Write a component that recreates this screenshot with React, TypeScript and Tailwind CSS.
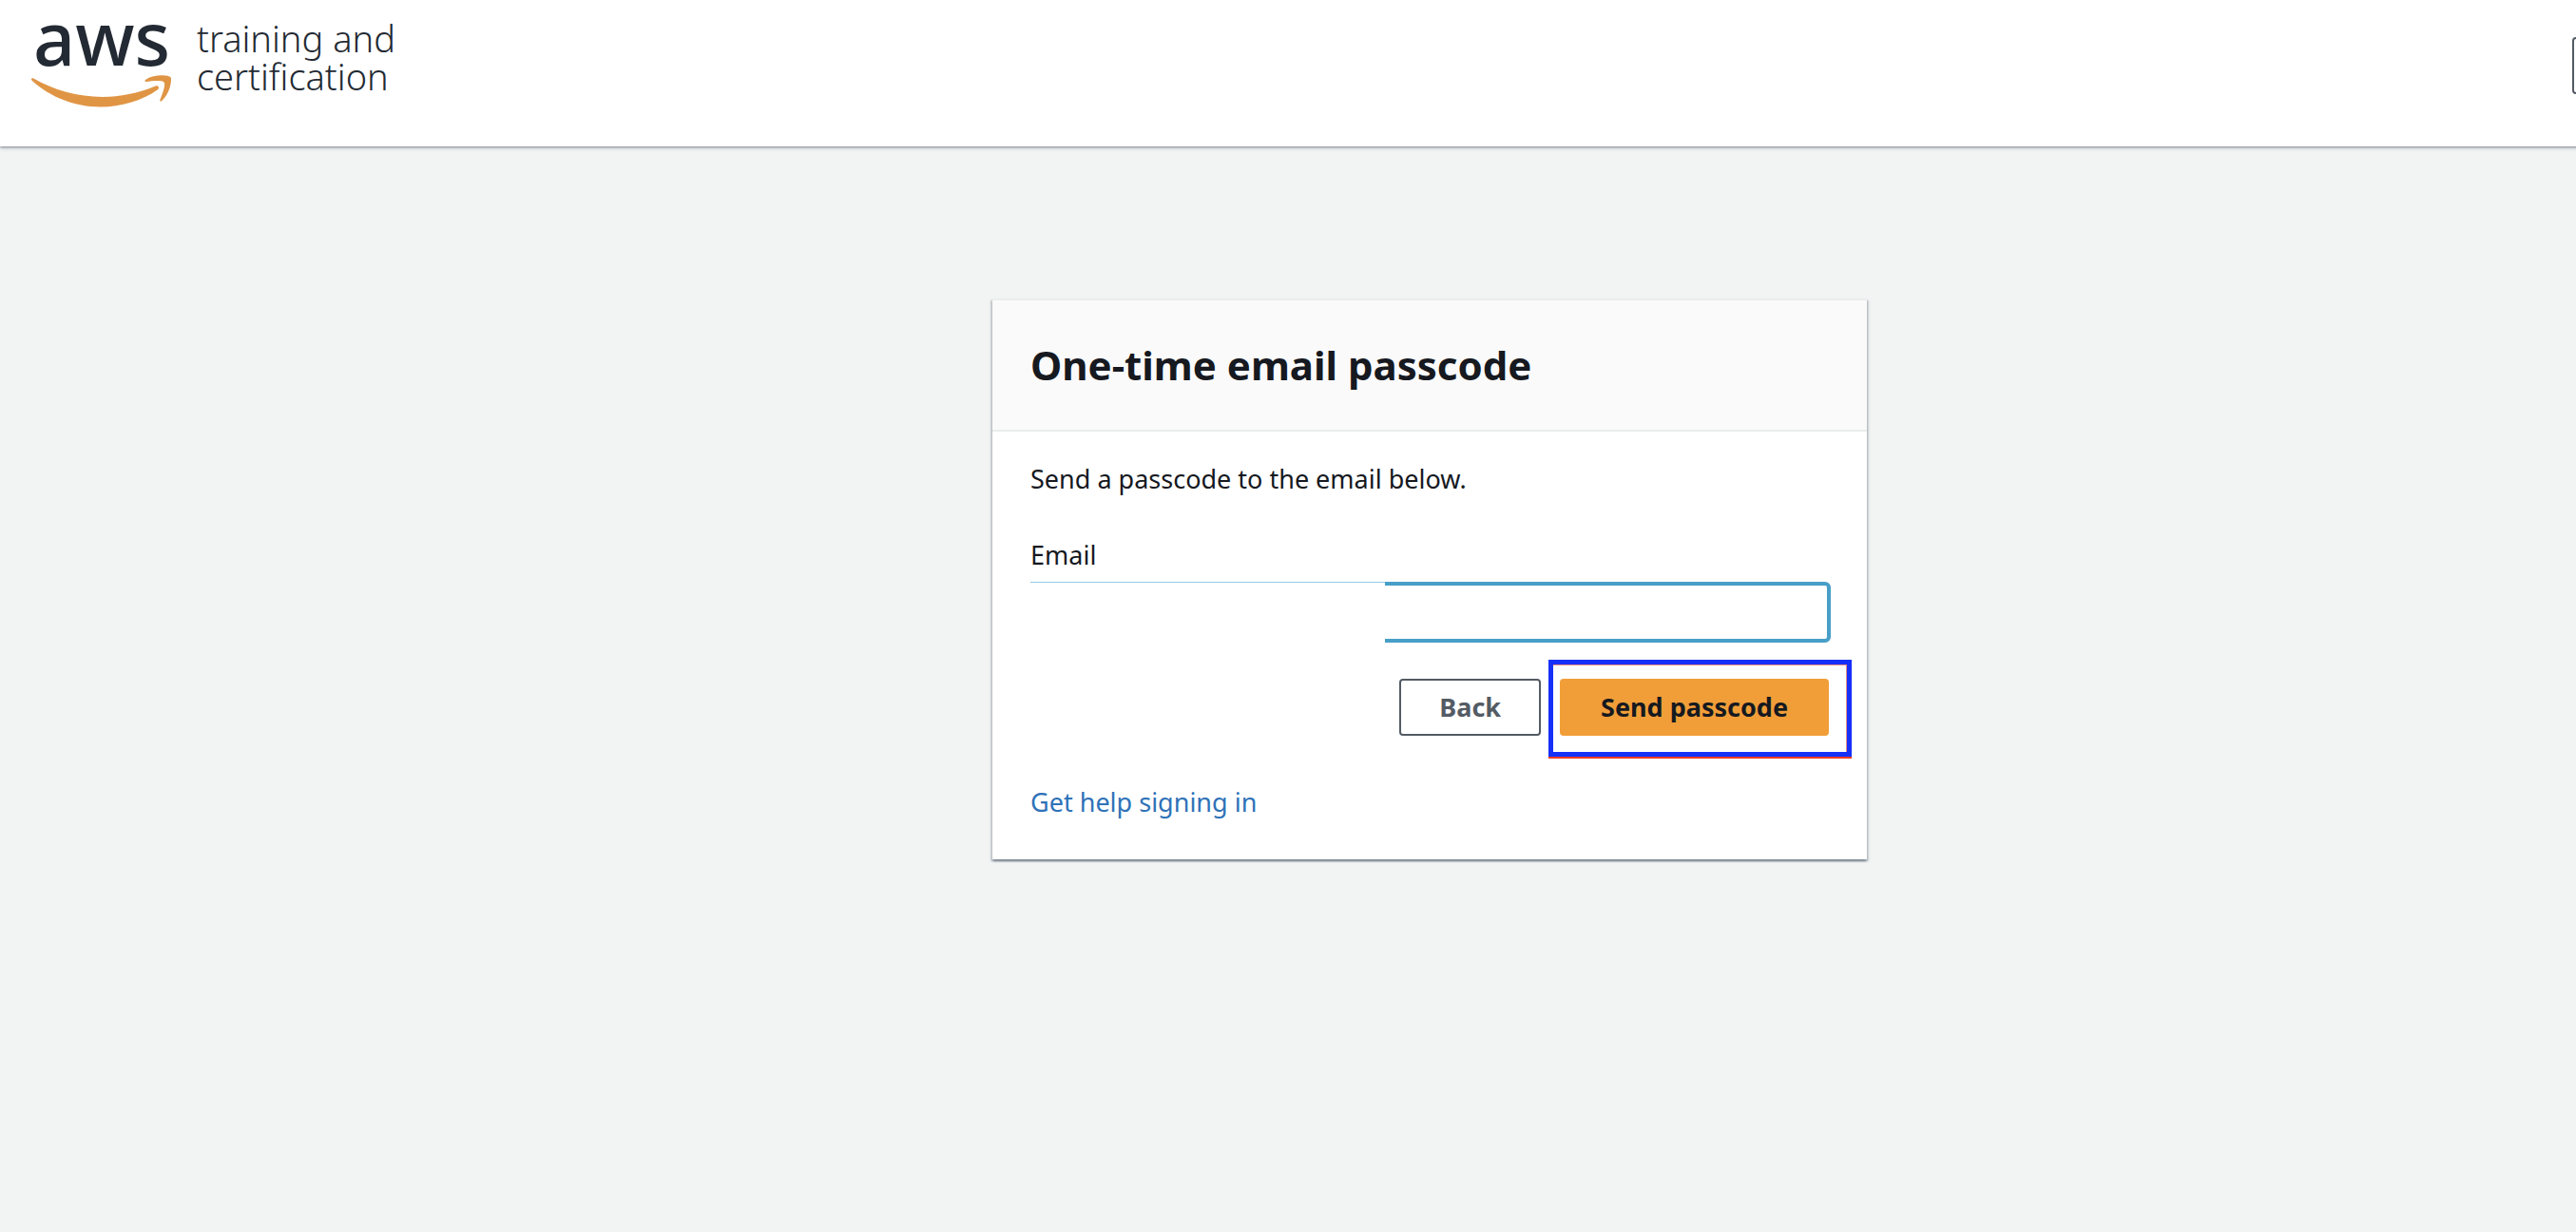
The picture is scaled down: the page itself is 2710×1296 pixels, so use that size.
function AwsLogo() {
  return (
    <svg viewBox="0 0 304 182" className="w-[149px] h-[89px] overflow-visible" role="img" aria-label="AWS">
      <text
        x="6"
        y="93"
        fill="#232a33"
        fontFamily='"Noto Sans", sans-serif'
        fontSize="158"
        fontWeight="500"
      >
        aws
      </text>
      <g fill="#e09545">
        <path d="M273.5,143.7c-32.9,24.3-80.7,37.2-121.8,37.2c-57.6,0-109.5-21.3-148.7-56.7c-3.1-2.8-0.3-6.6,3.4-4.4c42.4,24.6,94.7,39.5,148.8,39.5c36.5,0,76.6-7.6,113.5-23.2C274.2,133.6,278.9,139.7,273.5,143.7z" />
        <path d="M287.2,128.1c-4.2-5.4-27.8-2.6-38.5-1.3c-3.2,0.4-3.7-2.4-0.8-4.5c18.8-13.2,49.7-9.4,53.3-5c3.6,4.5-1,35.4-18.6,50.2c-2.7,2.3-5.3,1.1-4.1-1.9C282.5,155.7,291.4,133.4,287.2,128.1z" />
      </g>
    </svg>
  );
}

function Header() {
  return (
    <header className="flex items-start justify-between bg-white px-8 pt-6 pb-[41px] shadow-[0_1px_2px_rgba(20,30,50,0.35),0_2px_4px_rgba(20,30,50,0.2)]">
      <div className="flex items-start gap-[26px]">
        <AwsLogo />
        <p className="-mt-1 text-[38px] leading-10 font-light text-[#232a33]">
          training and
          <br />
          certification
        </p>
      </div>
      <button
        type="button"
        aria-label="Language"
        className="mt-[15px] mr-2 h-[60px] w-[262px] rounded border-2 border-[#545b64] bg-white"
      />
    </header>
  );
}

function PasscodeCard() {
  return (
    <section className="w-[920px] bg-white shadow-[0_2px_2px_rgba(10,25,45,0.35),2px_2px_2px_rgba(10,25,45,0.15),-2px_2px_2px_rgba(10,25,45,0.15)]">
      <div className="border-y-2 border-[#eaeded] bg-[#fafafa] px-10 py-10">
        <h1 className="text-[42px] leading-[56px] font-bold text-[#16191f]">One-time email passcode</h1>
      </div>
      <form className="px-10 pt-[30px] pb-10 leading-10 text-[#16191f]" onSubmit={(e) => e.preventDefault()}>
        <p>Send a passcode to the email below.</p>
        <label htmlFor="email" className="mt-10 block">
          Email
        </label>
        <div className="relative -mx-0.5 mt-2">
          <input
            id="email"
            type="email"
            className="block h-16 w-full rounded-md border-4 border-[#479fc8] bg-white px-4 outline-none"
          />
          <div className="pointer-events-none absolute top-0 left-0 h-16 w-[375px] bg-white pl-0.5">
            <div className="border-t border-[#8fcde4]" />
          </div>
        </div>
        <div className="mt-[38px] flex justify-end gap-5 font-bold">
          <button
            type="button"
            className="h-[60px] rounded border-2 border-[#545b64] bg-white px-10 text-[#545b64]"
          >
            Back
          </button>
          <div className="relative">
            <button type="submit" className="h-[60px] rounded bg-[#f19e39] px-[43px] text-[#16191f]">
              Send passcode
            </button>
            <span className="pointer-events-none absolute -top-5 -right-6 -bottom-[22px] -left-3 border-[5px] border-[#1730f8] shadow-[0_2px_0_#f03a26,inset_-1px_1px_0_#e58a86]" />
          </div>
        </div>
        <a href="#help" className="mt-[50px] block w-fit text-[#2f72b8]">
          Get help signing in
        </a>
      </form>
    </section>
  );
}

export default function App() {
  return (
    <div className="min-h-screen overflow-hidden bg-[#f1f4f3] font-['Noto_Sans',sans-serif] text-[27px]">
      <div className="w-[111%]">
        <Header />
        <main className="flex justify-center pt-40">
          <PasscodeCard />
        </main>
      </div>
    </div>
  );
}
